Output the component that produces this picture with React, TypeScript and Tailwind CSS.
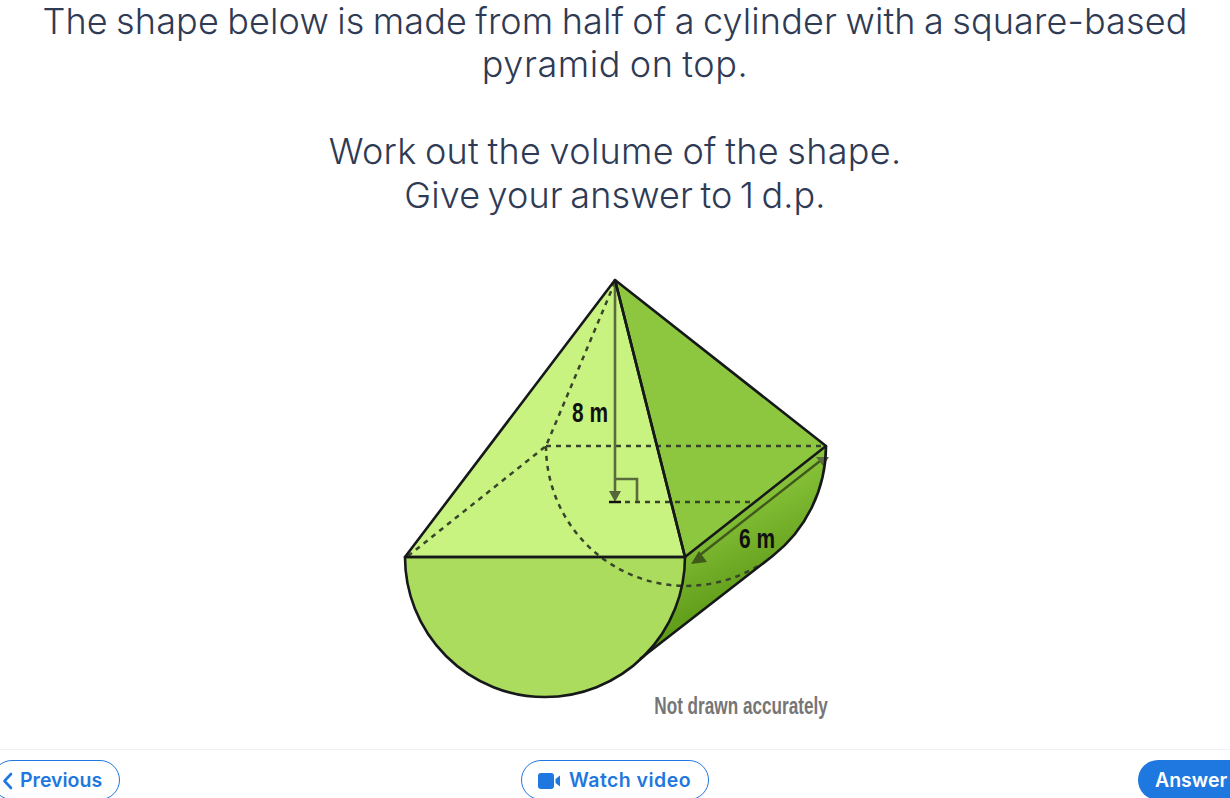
export default function App() {
  return (
    <div className="flex h-[798px] w-[1230px] flex-col overflow-hidden bg-white font-['Inter',sans-serif] text-[#2f3a54]">
      <div className="text-center text-[36px] font-light leading-[43.4px] tracking-[0.15px] [word-spacing:-2px]">
        <p>The shape below is made from half of a cylinder with a square-based<br /><span className="tracking-[0.6px]">pyramid on top.</span></p>
        <p className="mt-[43.4px]"><span className="tracking-[0.3px]">Work out the volume of the shape.</span><br /><span className="[word-spacing:-3px]">Give your answer to 1 d.p.</span></p>
      </div>
      <div className="mt-[53px] flex justify-center">
        <svg className="block" width="510" height="450" viewBox="360 270 510 450">
          <defs>
            <linearGradient id="curve" gradientUnits="userSpaceOnUse" x1="715" y1="500" x2="760" y2="590">
              <stop offset="0" stopColor="#8cc63e" />
              <stop offset="1" stopColor="#5f9c18" />
            </linearGradient>
          </defs>
          <path d="M685 557 L826 446 A140 140 0 0 1 772.6 556 L640 659 L685 557Z" fill="url(#curve)" />
          <polygon points="615,280 826,446 685,557" fill="#8dc73f" />
          <polygon points="405,557 615,280 685,557" fill="#c9f380" />
          <path d="M405 557 H685 A140 140 0 0 1 405 557Z" fill="#acdc5e" />
          <g fill="none" stroke="#38452a" strokeWidth="2.5" strokeDasharray="5 5">
            <line x1="615" y1="282" x2="546" y2="446" />
            <line x1="408" y1="556" x2="546" y2="446" />
            <line x1="546" y1="446" x2="826" y2="446" />
            <line x1="625" y1="502" x2="752" y2="502" />
            <path d="M546 446 A140 140 0 0 0 758 566" />
          </g>
          <g fill="none" stroke="#5a6b3c" strokeWidth="2.6">
            <line x1="615" y1="282" x2="615" y2="494" />
            <path d="M615 479 H637 V501" />
          </g>
          <polygon points="609,491 621,491 615,502" fill="#55663a" />
          <line x1="609" y1="502" x2="621" y2="502" stroke="#111" strokeWidth="2.5" />
          <line x1="700" y1="555" x2="820" y2="461" stroke="#3f5a1a" strokeWidth="2.4" />
          <polygon points="691,564 707,562 699,551" fill="#3f5a1a" />
          <polygon points="829,457 816,457 823,466" fill="#5a6b3c" />
          <g fill="none" stroke="#16181a" strokeWidth="2.6" strokeLinejoin="round">
            <polygon points="405,557 615,280 685,557" />
            <polygon points="615,280 826,446 685,557" />
            <path d="M405 557 H685 A140 140 0 0 1 405 557Z" />
            <path d="M826 446 A140 140 0 0 1 772.6 556 L640 659" />
          </g>
          <g fontFamily="'Liberation Sans','Arial',sans-serif" fontWeight="700">
            <text x="590" y="422" textAnchor="middle" fontSize="27" fill="#111" textLength="36" lengthAdjust="spacingAndGlyphs">8 m</text>
            <text x="757" y="548" textAnchor="middle" fontSize="27" fill="#111" textLength="36" lengthAdjust="spacingAndGlyphs">6 m</text>
            <text transform="translate(741 714) scale(0.73 1)" textAnchor="middle" fontSize="23.5" fill="#767676">Not drawn accurately</text>
          </g>
        </svg>
      </div>
      <div className="mt-[29px] flex h-[49px] items-start justify-between border-t border-[#eef1f6] pt-[10px] text-[19.5px] font-semibold text-[#1f78e0]">
        <button className="ml-[-8px] flex h-[40px] w-[128px] shrink-0 items-center gap-[7px] rounded-full border border-[#1f78e0] pl-[9px] pt-[1px]">
          <svg width="11" height="18" viewBox="0 0 11 18" fill="none" stroke="#1f78e0" strokeWidth="2.6" strokeLinecap="round" strokeLinejoin="round">
            <path d="M9 2 L2.5 9 L9 16" />
          </svg>
          Previous
        </button>
        <button className="ml-[-28px] flex h-[40px] w-[188px] shrink-0 items-center gap-[8px] rounded-full border border-[#1f78e0] pl-[16px] pt-[1px] tracking-[0.45px]">
          <svg width="23" height="16" viewBox="0 0 23 16" fill="#1f78e0">
            <rect x="0" y="0" width="16" height="16" rx="3" />
            <path d="M17.5 6 L22 2.5 V13.5 L17.5 10Z" />
          </svg>
          Watch video
        </button>
        <button className="mr-[-30px] flex h-[40px] w-[122px] shrink-0 items-center rounded-full bg-[#1f78e0] pl-[17px] pt-[1px] text-white">
          Answer
        </button>
      </div>
    </div>
  );
}
